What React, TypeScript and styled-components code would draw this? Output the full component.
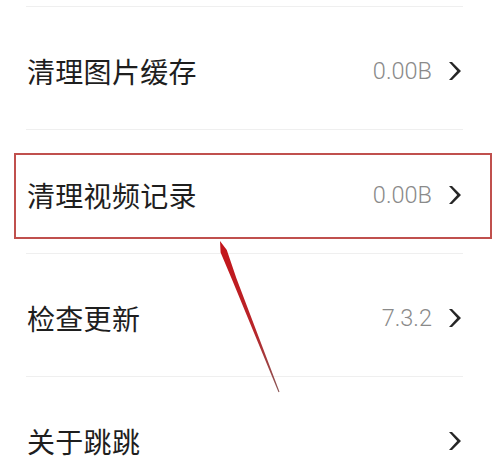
import React from "react";
import styled, { createGlobalStyle } from "styled-components";

const Global = createGlobalStyle`
  html, body { margin: 0; padding: 0; background: #ffffff; }
  body { font-family: "Noto Sans CJK SC", "Noto Sans", sans-serif; }
`;

const Page = styled.div`
  position: relative;
  width: 503px;
  height: 475px;
  overflow: hidden;
  background: #ffffff;
  padding-top: 6px;
  box-sizing: border-box;
`;

const List = styled.ul`
  list-style: none;
  margin: 0 40px 0 26px;
  padding: 0;
`;

const Item = styled.li`
  position: relative;
  height: 123.4px;
  box-sizing: border-box;
  border-top: 1.5px solid #efefef;
  display: flex;
  align-items: center;
  padding: 6px 1px 0 1px;
`;

const Label = styled.span`
  flex: 1;
  font-size: 28px;
  color: #1e1e1e;
  letter-spacing: 0.3px;
`;

const Value = styled.span`
  font-family: "Roboto", "Noto Sans", sans-serif;
  font-weight: 300;
  font-size: 23.5px;
  color: #8a8a8a;
  margin-right: 16px;
`;

const Highlight = styled.div`
  position: absolute;
  top: 23px;
  bottom: 14px;
  left: -12px;
  right: -29px;
  border: 2px solid #c0504d;
  pointer-events: none;
`;

const ArrowLayer = styled.svg`
  position: absolute;
  left: 0;
  top: 0;
  pointer-events: none;
`;

const Chevron = () => (
  <svg width="14" height="20" viewBox="0 0 14 20">
    <path d="M1 1 L4 1 L13 10 L4 19 L1 19 L9.2 10 Z" fill="#262626" />
  </svg>
);

type Row = { label: string; value?: string; highlighted?: boolean };

const rows: Row[] = [
  { label: "清理图片缓存", value: "0.00B" },
  { label: "清理视频记录", value: "0.00B", highlighted: true },
  { label: "检查更新", value: "7.3.2" },
  { label: "关于跳跳" },
];

export default function App() {
  return (
    <>
      <Global />
      <Page>
        <List>
          {rows.map((r) => (
            <Item key={r.label}>
              <Label>{r.label}</Label>
              {r.value && <Value>{r.value}</Value>}
              <Chevron />
              {r.highlighted && <Highlight />}
            </Item>
          ))}
        </List>
        <ArrowLayer width="503" height="475" viewBox="0 0 503 475">
          <defs>
            <linearGradient id="arrowGrad" x1="220" y1="241" x2="279" y2="392" gradientUnits="userSpaceOnUse">
              <stop offset="0" stopColor="#c4141a" />
              <stop offset="0.6" stopColor="#b8262a" />
              <stop offset="1" stopColor="#8a5656" />
            </linearGradient>
          </defs>
          <path
            d="M220 241 L226.8 250 L236.4 278.3 L279.5 391.8 L278.5 392.2 L232.2 280.1 L220.6 252.5 Z"
            fill="url(#arrowGrad)"
          />
        </ArrowLayer>
      </Page>
    </>
  );
}
